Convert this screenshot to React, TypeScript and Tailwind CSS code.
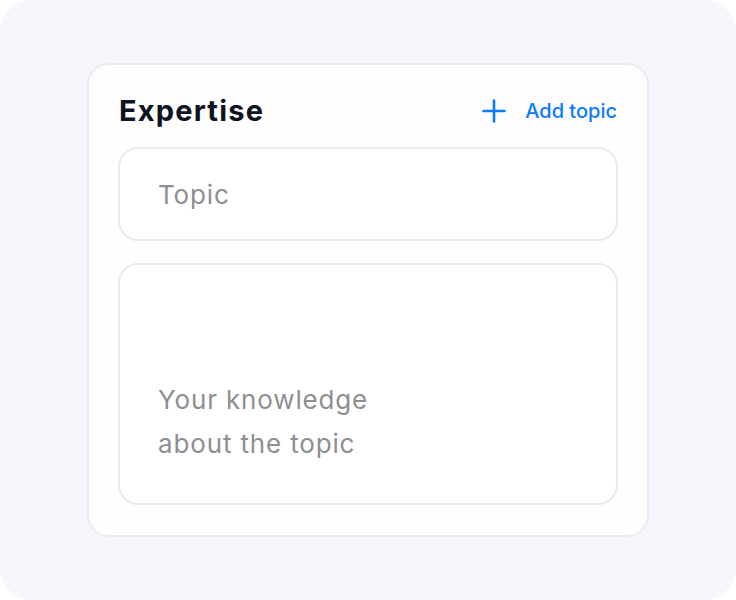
export default function App() {
  return (
    <div className="w-[736px] h-[600px] bg-white">
      <div
        className="w-full h-full rounded-[32px] bg-[#f6f5fb] flex items-center justify-center"
        style={{ fontFamily: 'Inter, "Noto Sans", sans-serif' }}
      >
        <div className="w-[562px] h-[474px] rounded-[22px] border-2 border-[#ebebf0] bg-[#fefeff] px-[29px] pt-[28px] pb-[30px] flex flex-col">
          <div className="h-[36px] mb-[18px] flex items-center justify-between">
            <h2 className="text-[29px] font-bold text-[#0d1321] tracking-[1.2px] pl-px">Expertise</h2>
            <button className="flex items-center gap-[19px] text-[#0a7aff] pr-px">
              <svg width="24" height="24" viewBox="0 0 24 24" fill="none">
                <path d="M12 1.5v21M1.5 12h21" stroke="currentColor" strokeWidth="2.6" strokeLinecap="round" />
              </svg>
              <span className="text-[20px] font-medium">Add topic</span>
            </button>
          </div>
          <div className="h-[94px] rounded-[20px] border-2 border-[#ebebef] bg-white px-[38px] flex items-center">
            <span className="text-[26px] tracking-[0.85px] text-[#8e8e93]">Topic</span>
          </div>
          <div className="mt-[22px] h-[242px] rounded-[20px] border-2 border-[#ebebef] bg-white px-[38px] pb-[37px] flex flex-col justify-end">
            <p className="text-[26px] leading-[44px] tracking-[0.85px] text-[#8e8e93]">
              Your knowledge
              <br />
              about the topic
            </p>
          </div>
        </div>
      </div>
    </div>
  )
}
